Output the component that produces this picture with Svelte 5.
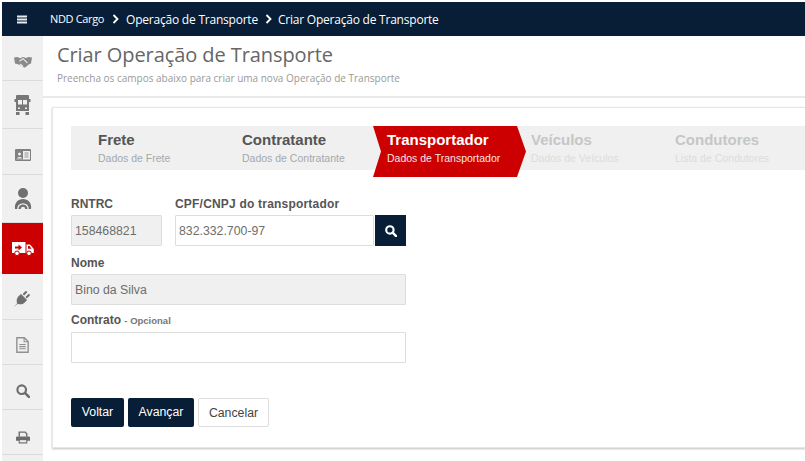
<script>
  const steps = [
    { t: 'Frete', s: 'Dados de Frete', st: 'done' },
    { t: 'Contratante', s: 'Dados de Contratante', st: 'done' },
    { t: 'Transportador', s: 'Dados de Transportador', st: 'active' },
    { t: 'Veículos', s: 'Dados de Veículos', st: 'todo' },
    { t: 'Condutores', s: 'Lista de Condutores', st: 'todo' }
  ];
</script>

<div class="page">
  <header class="top">
    <svg class="burger" width="10" height="9" viewBox="0 0 10 9"><path d="M0 0.5h10v2H0zM0 3.5h10v2H0zM0 6.5h10v2H0z" fill="#e8ebee"/></svg>
    <span class="crumb first">NDD Cargo</span>
    <svg class="chev one" width="8" height="10" viewBox="0 0 8 10"><path d="M1.5 1l4 4-4 4" fill="none" stroke="#fff" stroke-width="1.8"/></svg>
    <span class="crumb">Operação de Transporte</span>
    <svg class="chev" width="8" height="10" viewBox="0 0 8 10"><path d="M1.5 1l4 4-4 4" fill="none" stroke="#fff" stroke-width="1.8"/></svg>
    <span class="crumb">Criar Operação de Transporte</span>
  </header>

  <div class="body">
    <nav class="side">
      <div class="item i-hand">
        <svg width="20" height="12" viewBox="0 0 18 12"><path d="M0 1.500l3.500-.5 2.500 1.200L9 1l3 1 2.500-1 3.500.5-1 6-2 .7-3.500 3-1.500.3-4-2.500L3 8 1 7.500z" fill="#8a8a8a"/><path d="M5.500 5.200L9 2.600l4.400 4.300M6 8l3.200 2.400" fill="none" stroke="#f0f0f0" stroke-width="1.100"/></svg>
      </div>
      <div class="item i-truck">
        <svg width="19" height="20" viewBox="0 0 19 20"><path d="M4 0h11a1 1 0 0 1 1 1v3h1.500v3H16v9H3V7H1.500V4H3V1a1 1 0 0 1 1-1z" fill="#777"/><path d="M5 5h4v4.500H5zM10 5h4v4.500h-4z" fill="#f0f0f0"/><path d="M3 17h3.500v3H3zM12.500 17H16v3h-3.500z" fill="#777"/><path d="M5 12.500h2v1.500H5zM12 12.500h2v1.500h-2z" fill="#f0f0f0"/></svg>
      </div>
      <div class="item i-card">
        <svg width="16" height="12" viewBox="0 0 16 12"><rect width="16" height="12" rx="1" fill="#808080"/><rect x="1" y="2" width="14" height="8.500" fill="#efefef"/><rect x="1" y="2" width="7" height="8.500" fill="#808080"/><circle cx="4.500" cy="5" r="1.500" fill="#efefef"/><path d="M2 9.500c.3-2 4.700-2 5 0z" fill="#efefef"/><path d="M9.500 4h4M9.500 6h4M9.500 8h4" stroke="#999" stroke-width="1"/></svg>
      </div>
      <div class="item i-person">
        <svg width="18" height="21" viewBox="0 0 18 21"><circle cx="9" cy="5" r="5" fill="#707070"/><path d="M1 21c-1-6 3-10 8-10s9 4 8 10z" fill="#707070"/><path d="M3.800 21a5.200 5.200 0 0 1 10.400 0" fill="none" stroke="#f0f0f0" stroke-width="1.300"/><path d="M6.800 21a2.200 2.200 0 0 1 4.400 0" fill="#f0f0f0"/></svg>
      </div>
      <div class="item active">
        <svg width="22" height="14" viewBox="0 0 22 14"><path d="M0 0h13.500v11H0z" fill="#fff"/><path d="M14.500 2.500h3.500L21.800 7v4h-7.300z" fill="#fff"/><circle cx="5" cy="11.300" r="2.300" fill="#fff" stroke="#c00" stroke-width="1"/><circle cx="17" cy="11.300" r="2.300" fill="#fff" stroke="#c00" stroke-width="1"/><path d="M3 4.500h3.500V2.500l3.500 3-3.500 3v-2H3z" fill="#c00"/><path d="M16 4h1.500l2 2.800H16z" fill="#c00"/></svg>
      </div>
      <div class="item i-plug">
        <svg width="17" height="17" viewBox="0 0 15 15"><path d="M0 15l2.800-3.200C1.800 9.500 2.500 7 4 5.500L6.200 3.500l5.300 5.300L9.500 11c-1.500 1.500-4 2.200-6.300 1.200z" fill="#6f6f6f"/><path d="M7.600 3.600L10.500 0.700l1.300 1.300L8.900 4.900zM10.100 6.100L13 3.200l1.300 1.300-2.900 2.900z" fill="#6f6f6f"/></svg>
      </div>
      <div class="item i-doc">
        <svg width="13" height="16" viewBox="0 0 12 15"><path d="M.7.700h7l3.600 3.600v10H.7z" fill="none" stroke="#909090" stroke-width="1.300"/><path d="M7.500.700v3.800h3.800" fill="none" stroke="#909090" stroke-width="1"/><path d="M3 7h6M3 9h6M3 11h6" stroke="#909090" stroke-width="1.100"/></svg>
      </div>
      <div class="item i-search">
        <svg width="14" height="14" viewBox="0 0 13 13"><circle cx="5.300" cy="5.300" r="4" fill="none" stroke="#6c6c6c" stroke-width="2"/><path d="M8.300 8.300l3.700 3.700" stroke="#6c6c6c" stroke-width="2.400" stroke-linecap="round"/></svg>
      </div>
      <div class="item i-print">
        <svg width="14" height="13" viewBox="0 0 13 12"><path d="M3 5V1h5.500L10 2.500V5" fill="none" stroke="#6c6c6c" stroke-width="1.300"/><path d="M1 5h11a1 1 0 0 1 1 1v3h-2.500v2.500h-8V9H0V6a1 1 0 0 1 1-1z" fill="#6c6c6c"/><path d="M3.500 8.500h6v2h-6z" fill="#f0f0f0"/></svg>
      </div>
    </nav>

    <main class="main">
      <div class="head">
        <h1>Criar Operação de Transporte</h1>
        <p>Preencha os campos abaixo para criar uma nova Operação de Transporte</p>
      </div>

      <section class="panel">
        <ol class="steps">
          {#each steps as step}
            <li class="step {step.st}">
              <b>{step.t}</b>
              <small>{step.s}</small>
            </li>
          {/each}
        </ol>

        <form class="form">
          <div class="row">
            <div class="field rntrc">
              <label for="r">RNTRC</label>
              <input id="r" class="ro" value="158468821" readonly />
            </div>
            <div class="field cpf">
              <label for="c">CPF/CNPJ do transportador</label>
              <div class="group">
                <input id="c" value="832.332.700-97" />
                <button type="button" class="search" aria-label="Buscar">
                  <svg width="12" height="12" viewBox="0 0 13 13"><circle cx="5.300" cy="5.300" r="4" fill="none" stroke="#fff" stroke-width="2.300"/><path d="M8.300 8.300l3.700 3.700" stroke="#fff" stroke-width="2.600" stroke-linecap="round"/></svg>
                </button>
              </div>
            </div>
          </div>
          <div class="field wide">
            <label for="n">Nome</label>
            <input id="n" class="ro" value="Bino da Silva" readonly />
          </div>
          <div class="field wide">
            <label for="k">Contrato <span class="opt">- Opcional</span></label>
            <input id="k" />
          </div>
          <div class="actions">
            <button type="button" class="btn dark">Voltar</button>
            <button type="button" class="btn dark">Avançar</button>
            <button type="button" class="btn light">Cancelar</button>
          </div>
        </form>
      </section>
    </main>
  </div>
</div>

<style>
  :global(body) { margin: 0; background: #fff; }
  .page {
    width: 805px;
    height: 461px;
    box-sizing: border-box;
    padding: 2px 0 0 2px;
    overflow: hidden;
    display: flex;
    flex-direction: column;
    font-family: "Liberation Sans", Arial, sans-serif;
  }
  .top {
    height: 34px;
    flex: none;
    background: #071e36;
    color: #fff;
    display: flex;
    align-items: center;
    font-family: "Open Sans", sans-serif;
    font-size: 12px;
  }
  .burger { margin-left: 15px; margin-right: 23px; }
  .crumb { white-space: nowrap; letter-spacing: -0.22px; }
  .crumb.first { font-size: 11px; letter-spacing: -0.35px; position: relative; top: -1px; }
  .chev { margin: 0 5px 0 7px; }
  .chev.one { margin: 0 6px 0 8px; }
  .body { flex: 1; display: flex; min-height: 0; }
  .side {
    width: 41px;
    flex: none;
    background: #f0f0f0;
    display: flex;
    flex-direction: column;
  }
  .item {
    display: flex;
    align-items: center;
    justify-content: center;
    box-sizing: border-box;
    border-bottom: 1px solid #dcdcdc;
    flex: none;
  }
  .i-hand { height: 45px; padding-top: 7px; }
  .i-truck { height: 48px; }
  .i-card { height: 46px; padding-top: 6px; }
  .i-person { height: 48px; }
  .active { height: 51px; background: #cc0000; border-bottom: 0; }
  .i-plug { height: 46px; padding-top: 4px; }
  .i-doc { height: 45px; padding-top: 6px; }
  .i-search { height: 45px; padding-top: 8px; }
  .i-print { height: 45px; padding-top: 10px; }
  .main { flex: 1; min-width: 0; display: flex; flex-direction: column; }
  .head {
    height: 62px;
    flex: none;
    box-sizing: border-box;
    padding: 4px 0 0 14px;
    border-bottom: 2px solid #e9e9e9;
    font-family: "Open Sans", sans-serif;
  }
  h1 {
    margin: 0;
    font-size: 20px;
    font-weight: 400;
    line-height: 29px;
    color: #666;
    letter-spacing: -0.08px;
  }
  p {
    margin: 3px 0 0;
    font-size: 10px;
    line-height: 13px;
    color: #999;
  }
  .panel {
    margin: 9px 0 0 9px;
    height: 341px;
    box-sizing: border-box;
    border: 1px solid #e6e6e6;
    border-right: 0;
    box-shadow: 0 1px 2px rgba(0, 0, 0, 0.25);
    padding: 18px 0 0 18px;
    background: #fff;
  }
  .steps {
    list-style: none;
    margin: 0;
    padding: 0;
    height: 44px;
    background: #f0f0f0;
    display: flex;
  }
  .step {
    width: 144px;
    flex: none;
    box-sizing: border-box;
    padding: 4px 0 0 5px;
    display: flex;
    flex-direction: column;
    white-space: nowrap;
  }
  .step.done { padding-left: 27px; }
  .step.done:nth-child(2) { width: 158px; }
  .step b { font-size: 15px; line-height: 20px; color: #555; }
  .step small { font-size: 10.5px; line-height: 16px; color: #a3a8ad; }
  .step.todo b { color: #c6c6c6; }
  .step.todo small { color: #dcdcdc; }
  .step.active {
    width: 153px;
    padding-left: 14px;
    background: #cc0000;
    clip-path: polygon(0 0, 144px 0, 153px 50%, 144px 100%, 0 100%, 8px 50%);
  }
  .step.active b { color: #fff; }
  .step.active small { color: #fbe5e5; }
  .form { padding-top: 27px; width: 335px; }
  .row { display: flex; gap: 13px; }
  .field { display: flex; flex-direction: column; }
  label {
    font-size: 12px;
    font-weight: 700;
    color: #555;
    line-height: 14px;
    margin: 0 0 4px;
    white-space: nowrap;
  }
  .field.cpf label { letter-spacing: 0.2px; }
  .opt { font-size: 9.5px; color: #777; }
  input {
    box-sizing: border-box;
    height: 31px;
    border: 1px solid #ddd;
    border-radius: 1px;
    padding: 0 3px;
    font: 12.3px "Liberation Sans", Arial, sans-serif;
    color: #6e6e6e;
    background: #fff;
    width: 100%;
    outline: none;
  }
  .ro { background: #f0f0f0; }
  .rntrc { width: 91px; }
  .cpf { width: 231px; }
  .group { display: flex; gap: 1px; }
  .group input { width: 199px; flex: none; }
  .search {
    width: 31px;
    height: 31px;
    flex: none;
    border: 0;
    padding: 0;
    background: #071e36;
    display: flex;
    align-items: center;
    justify-content: center;
  }
  .wide { margin-top: 10px; }
  .wide + .wide { margin-top: 8px; }
  .actions { display: flex; gap: 4px; margin-top: 35px; }
  .btn {
    height: 29px;
    box-sizing: border-box;
    border-radius: 2px;
    font: 12.3px "Liberation Sans", Arial, sans-serif;
    padding: 0;
  }
  .dark { background: #071e36; color: #fff; border: 0; padding-bottom: 2px; }
  .dark:first-child { width: 53px; }
  .dark:nth-child(2) { width: 66px; }
  .light { width: 71px; background: #fff; color: #444; border: 1px solid #ddd; }
</style>
